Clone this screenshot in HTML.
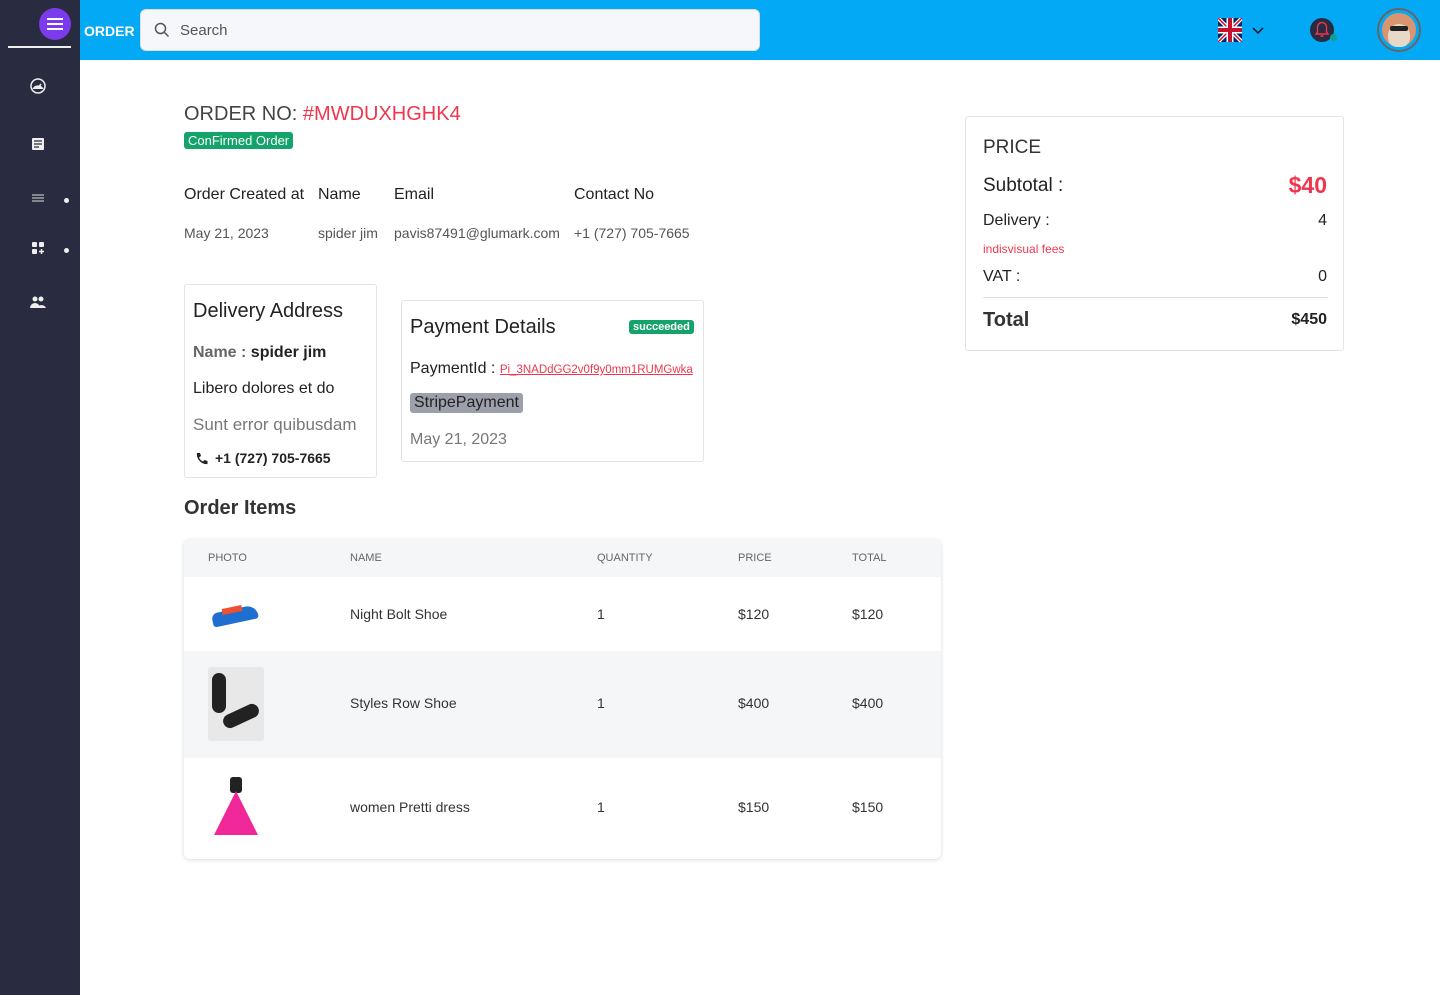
<!DOCTYPE html>
<html><head><meta charset="utf-8"><style>
*{box-sizing:border-box;margin:0;padding:0}
body{width:1440px;height:995px;position:relative;font-family:"Liberation Sans",sans-serif;background:#fff;color:#222;overflow:hidden}
.side{position:absolute;left:0;top:0;width:80px;height:995px;background:#292b40}
.top{position:absolute;left:80px;top:0;width:1360px;height:60px;background:#03a9f4}
.abs{position:absolute}
.card{position:absolute;border:1px solid #e3e3e3;border-radius:3px;background:#fff}
.ic{position:absolute;left:30px;width:16px;height:16px}
</style></head><body>
<div class="side">
 <div class="abs" style="left:39px;top:8px;width:32px;height:32px;border-radius:50%;background:#7c3aed"></div>
 <div class="abs" style="left:47px;top:18px;width:16px;height:2px;background:#fff;box-shadow:0 5px 0 #fff,0 10px 0 #fff"></div>
 <div class="abs" style="left:8px;top:46px;width:63px;height:2px;background:#eee"></div>
 <svg class="ic" style="top:78px" viewBox="0 0 16 16"><circle cx="8" cy="8" r="7" fill="none" stroke="#eee" stroke-width="1.5"/><path d="M2.5 11a6 6 0 0 1 11 0z" fill="#eee"/><path d="M8 10l3-4" stroke="#eee" stroke-width="1.5"/></svg>
 <svg class="ic" style="top:136px" viewBox="0 0 16 16"><rect x="2" y="2" width="12" height="12" rx="1" fill="#eee"/><path d="M4 5h8M4 8h8M4 11h5" stroke="#292b40" stroke-width="1.2"/></svg>
 <svg class="ic" style="top:190px" viewBox="0 0 16 16"><path d="M2 5h12M2 8h12M2 11h12" stroke="#bbb" stroke-width="1.3"/></svg>
 <div class="abs" style="left:64px;top:198px;width:5px;height:5px;border-radius:50%;background:#eee"></div>
 <svg class="ic" style="top:240px" viewBox="0 0 16 16"><rect x="2" y="2" width="5" height="5" rx="1" fill="#eee"/><rect x="9" y="2" width="5" height="5" rx="1" fill="#eee"/><rect x="2" y="9" width="5" height="5" rx="1" fill="#eee"/><path d="M11.5 9v5M9 11.5h5" stroke="#eee" stroke-width="1.5"/></svg>
 <div class="abs" style="left:64px;top:248px;width:5px;height:5px;border-radius:50%;background:#eee"></div>
 <svg class="ic" style="top:294px" viewBox="0 0 16 16"><circle cx="5" cy="5" r="2.5" fill="#eee"/><circle cx="11" cy="5" r="2.5" fill="#eee"/><path d="M0 14a5 5 0 0 1 10 0zM7 14a5 5 0 0 1 9 0z" fill="#eee"/></svg>
</div>
<div class="top">
 <div class="abs" style="left:4px;top:23px;color:#fff;font-size:14px;font-weight:bold">ORDER</div>
 <div class="abs" style="left:60px;top:9px;width:620px;height:42px;background:#f5f7fa;border-radius:6px;border:1px solid #ddd"></div>
 <svg class="abs" style="left:74px;top:22px" width="16" height="16" viewBox="0 0 16 16"><circle cx="6.5" cy="6.5" r="5" fill="none" stroke="#555" stroke-width="1.5"/><path d="M10.5 10.5l4 4" stroke="#555" stroke-width="1.5"/></svg>
 <div class="abs" style="left:100px;top:22px;color:#555;font-size:15px">Search</div>
 <svg class="abs" style="left:1138px;top:18px" width="24" height="24" viewBox="0 0 24 24"><rect width="24" height="24" rx="2" fill="#012169"/><path d="M0 0L24 24M24 0L0 24" stroke="#fff" stroke-width="4"/><path d="M0 0L24 24M24 0L0 24" stroke="#c8102e" stroke-width="1.5"/><path d="M12 0v24M0 12h24" stroke="#fff" stroke-width="7"/><path d="M12 0v24M0 12h24" stroke="#c8102e" stroke-width="4"/></svg>
 <svg class="abs" style="left:1172px;top:25px" width="12" height="10" viewBox="0 0 12 10"><path d="M1 3l5 5 5-5" fill="none" stroke="#111" stroke-width="1.5"/></svg>
 <div class="abs" style="left:1230px;top:18px;width:24px;height:24px;border-radius:50%;background:#292b40"></div>
 <svg class="abs" style="left:1234px;top:20px" width="16" height="18" viewBox="0 0 16 18"><path d="M3.5 12V7a4.5 4.5 0 0 1 9 0v5l1.5 2h-12z M6.5 16h3" fill="none" stroke="#f0364e" stroke-width="1.4"/></svg>
 <div class="abs" style="left:1250px;top:34px;width:7px;height:7px;border-radius:50%;background:#10a090"></div>
 <div class="abs" style="left:1297px;top:8px;width:44px;height:44px;border-radius:50%;border:2px solid #666;background:#03a9f4"></div>
 <div class="abs" style="left:1302px;top:13px;width:34px;height:34px;border-radius:50%;background:#d99470"></div>
 <div class="abs" style="left:1308px;top:24px;width:22px;height:23px;border-radius:50% 50% 40% 40%;background:#e8d8c8"></div>
 <div class="abs" style="left:1310px;top:26px;width:18px;height:5px;background:#222;border-radius:2px"></div>
</div>

<div class="abs" style="left:184px;top:103px;font-size:20px;color:#444">ORDER NO: <span style="color:#f0364e">#MWDUXHGHK4</span></div>
<div class="abs" style="left:184px;top:132px;background:#14a36b;color:#fff;font-size:13px;padding:1px 4px;border-radius:3px;line-height:15px">ConFirmed Order</div>
<div class="abs" style="left:184px;top:186px;font-size:16px">Order Created at</div>
<div class="abs" style="left:318px;top:186px;font-size:16px">Name</div>
<div class="abs" style="left:394px;top:186px;font-size:16px">Email</div>
<div class="abs" style="left:574px;top:186px;font-size:16px">Contact No</div>
<div class="abs" style="left:184px;top:225px;font-size:14px;color:#555">May 21, 2023</div>
<div class="abs" style="left:318px;top:225px;font-size:14px;color:#555">spider jim</div>
<div class="abs" style="left:394px;top:225px;font-size:14px;color:#555">pavis87491@glumark.com</div>
<div class="abs" style="left:574px;top:225px;font-size:14px;color:#555">+1 (727) 705-7665</div>

<div class="card" style="left:184px;top:284px;width:193px;height:194px">
 <div class="abs" style="left:8px;top:15px;font-size:20px">Delivery Address</div>
 <div class="abs" style="left:8px;top:59px;font-size:16px;font-weight:bold;color:#666">Name : <span style="color:#222">spider jim</span></div>
 <div class="abs" style="left:8px;top:95px;font-size:16px">Libero dolores et do</div>
 <div class="abs" style="left:8px;top:130px;font-size:17px;color:#777">Sunt error quibusdam</div>
 <svg class="abs" style="left:10px;top:167px" width="14" height="14" viewBox="0 0 14 14"><path d="M2 1l3 0 1 3-2 1.5a8 8 0 0 0 4 4L9.5 8l3 1 0 3C7 13 1 7 2 1z" fill="#222"/></svg>
 <div class="abs" style="left:30px;top:165px;font-size:14px;font-weight:bold">+1 (727) 705-7665</div>
</div>
<div class="card" style="left:401px;top:300px;width:303px;height:162px">
 <div class="abs" style="left:8px;top:15px;font-size:20px">Payment Details</div>
 <div class="abs" style="left:227px;top:19px;background:#14a36b;color:#fff;font-size:11px;font-weight:bold;padding:1px 4px;border-radius:3px">succeeded</div>
 <div class="abs" style="left:8px;top:59px;font-size:16px">PaymentId : <span style="color:#f0364e;font-size:11.5px;text-decoration:underline">Pi_3NADdGG2v0f9y0mm1RUMGwka</span></div>
 <div class="abs" style="left:8px;top:92px;font-size:16px;background:#9ca0aa;padding:1px 4px;border-radius:3px">StripePayment</div>
 <div class="abs" style="left:8px;top:130px;font-size:16px;color:#777">May 21, 2023</div>
</div>

<div class="abs" style="left:184px;top:497px;font-size:20px;font-weight:bold;color:#333">Order Items</div>
<div class="abs" style="left:184px;top:539px;width:757px;height:320px;border-radius:6px;box-shadow:0 1px 4px rgba(0,0,0,.15);overflow:hidden;font-size:14px;color:#333">
 <div class="abs" style="left:0;top:0;width:757px;height:38px;background:#f5f6f8"></div>
 <div class="abs" style="left:0;top:112px;width:757px;height:107px;background:#f5f6f8"></div>
 <div class="abs" style="top:13px;left:24px;font-size:11px;color:#666">PHOTO</div>
 <div class="abs" style="top:13px;left:166px;font-size:11px;color:#666">NAME</div>
 <div class="abs" style="top:13px;left:413px;font-size:11px;color:#666">QUANTITY</div>
 <div class="abs" style="top:13px;left:554px;font-size:11px;color:#666">PRICE</div>
 <div class="abs" style="top:13px;left:668px;font-size:11px;color:#666">TOTAL</div>
 <div class="abs" style="left:24px;top:58px;width:56px;height:36px"><div class="abs" style="left:4px;top:12px;width:46px;height:14px;background:#1e6fd0;border-radius:8px 14px 4px 4px;transform:rotate(-12deg)"></div><div class="abs" style="left:14px;top:10px;width:20px;height:6px;background:#f05030;transform:rotate(-12deg)"></div></div>
 <div class="abs" style="left:166px;top:67px">Night Bolt Shoe</div><div class="abs" style="left:413px;top:67px">1</div><div class="abs" style="left:554px;top:67px">$120</div><div class="abs" style="left:668px;top:67px">$120</div>
 <div class="abs" style="left:24px;top:128px;width:56px;height:74px;background:#e8e8e8;border-radius:3px"><div class="abs" style="left:4px;top:6px;width:14px;height:40px;background:#222;border-radius:7px"></div><div class="abs" style="left:14px;top:42px;width:38px;height:14px;background:#222;border-radius:7px;transform:rotate(-25deg)"></div></div>
 <div class="abs" style="left:166px;top:156px">Styles Row Shoe</div><div class="abs" style="left:413px;top:156px">1</div><div class="abs" style="left:554px;top:156px">$400</div><div class="abs" style="left:668px;top:156px">$400</div>
 <div class="abs" style="left:28px;top:238px;width:48px;height:62px"><div class="abs" style="left:18px;top:0;width:12px;height:16px;background:#222;border-radius:3px"></div><div class="abs" style="left:2px;top:14px;width:0;height:0;border-left:22px solid transparent;border-right:22px solid transparent;border-bottom:44px solid #f0289a"></div></div>
 <div class="abs" style="left:166px;top:260px">women Pretti dress</div><div class="abs" style="left:413px;top:260px">1</div><div class="abs" style="left:554px;top:260px">$150</div><div class="abs" style="left:668px;top:260px">$150</div>
</div>

<div class="card" style="left:965px;top:116px;width:379px;height:235px">
 <div class="abs" style="left:17px;top:20px;font-size:19px;color:#333">PRICE</div>
 <div class="abs" style="left:17px;top:58px;font-size:19px;color:#222">Subtotal :</div>
 <div class="abs" style="right:16px;top:55px;font-size:23px;color:#f0364e;font-weight:bold">$40</div>
 <div class="abs" style="left:17px;top:95px;font-size:16px">Delivery :</div>
 <div class="abs" style="right:16px;top:95px;font-size:16px">4</div>
 <div class="abs" style="left:17px;top:125px;font-size:12px;color:#f0364e">indisvisual fees</div>
 <div class="abs" style="left:17px;top:151px;font-size:16px">VAT :</div>
 <div class="abs" style="right:16px;top:151px;font-size:16px">0</div>
 <div class="abs" style="left:17px;top:180px;width:345px;height:1px;background:#ddd"></div>
 <div class="abs" style="left:17px;top:192px;font-size:20px;font-weight:bold;color:#333">Total</div>
 <div class="abs" style="right:16px;top:194px;font-size:16px;font-weight:bold">$450</div>
</div>
</body></html>
